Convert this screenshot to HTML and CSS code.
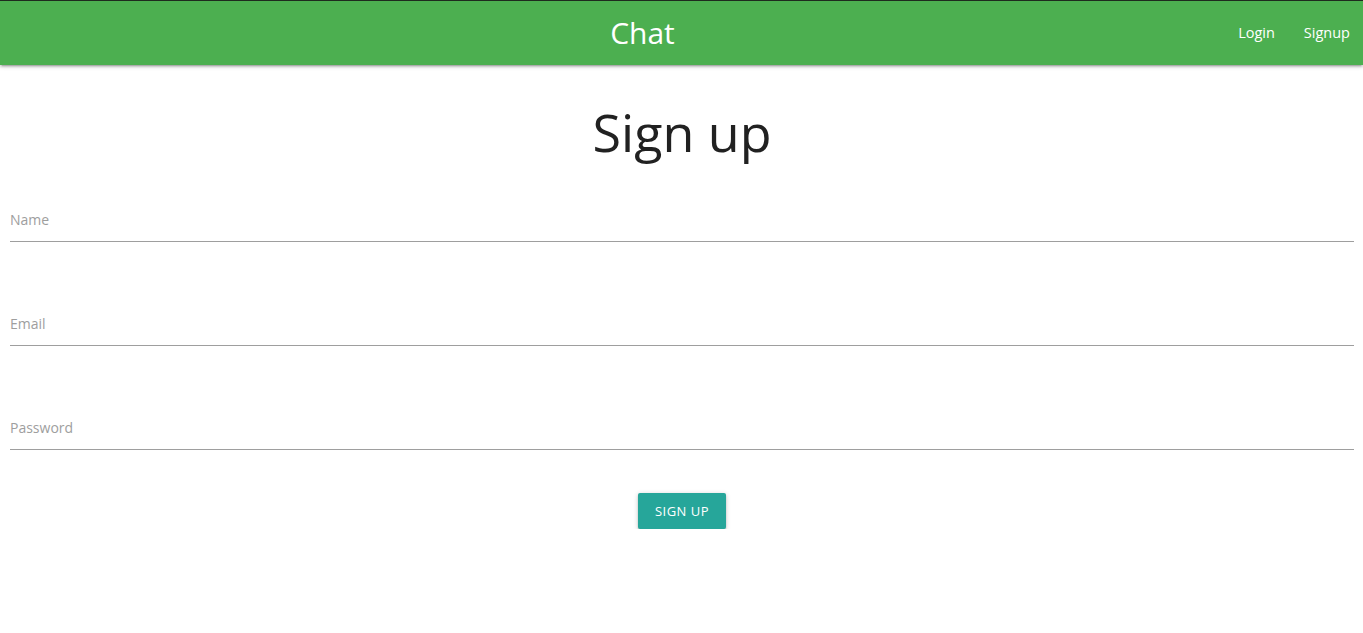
FILE: index.html
```html
<!DOCTYPE html>
<html lang="en">
<head>
<meta charset="utf-8">
<title>Chat - Sign up</title>
<link rel="stylesheet" href="styles.css">
</head>
<body>
<nav class="nav">
  <div class="nav-inner">
    <a class="brand" href="#">Chat</a>
    <ul class="nav-links">
      <li><a href="#">Login</a></li>
      <li><a href="#">Signup</a></li>
    </ul>
  </div>
</nav>
<main class="page">
  <h1 class="title">Sign up</h1>
  <form class="form">
    <div class="field">
      <input class="input" type="text" id="name">
      <label class="label" for="name">Name</label>
    </div>
    <div class="field">
      <input class="input" type="email" id="email">
      <label class="label" for="email">Email</label>
    </div>
    <div class="field">
      <input class="input" type="password" id="password">
      <label class="label" for="password">Password</label>
    </div>
    <div class="actions">
      <button class="btn" type="button">Sign up</button>
    </div>
  </form>
</main>
</body>
</html>
```

FILE: styles.css
```css
* { box-sizing: border-box; }
html, body { margin: 0; padding: 0; }
body {
  font-family: "Open Sans", "Noto Sans", sans-serif;
  color: rgba(0,0,0,0.87);
  background: #fff;
  border-top: 1px solid #1e2a1e;
}
.nav {
  background: #4caf50;
  height: 64px;
  box-shadow: 0 2px 2px 0 rgba(0,0,0,0.14), 0 3px 1px -2px rgba(0,0,0,0.12), 0 1px 5px 0 rgba(0,0,0,0.2);
  position: relative;
}
.nav-inner {
  height: 64px;
  display: flex;
  align-items: center;
  justify-content: center;
  position: relative;
}
.brand {
  color: #fff;
  text-decoration: none;
  font-size: 30px;
  line-height: 64px;
  margin-right: 78px;
}
.nav-links {
  position: absolute;
  right: 0;
  top: 0;
  margin: 0;
  padding: 0;
  list-style: none;
  display: flex;
  height: 64px;
}
.nav-links a {
  display: block;
  color: #fff;
  text-decoration: none;
  font-size: 14.5px;
  line-height: 64px;
  padding: 0 13px 0 16px;
}
.page {
  padding: 0 9px 0 10px;
}
.title {
  margin: 35px 0 0;
  text-align: center;
  font-weight: 400;
  font-size: 52px;
  line-height: 64px;
  color: #212121;
}
.form {
  display: flex;
  flex-direction: column;
  gap: 56px;
  margin-top: 30px;
}
.field {
  position: relative;
  height: 48px;
  border-bottom: 1px solid #9e9e9e;
}
.input {
  width: 100%;
  height: 47px;
  border: none;
  outline: none;
  background: transparent;
  font: inherit;
  font-size: 16px;
  padding: 0;
}
.label {
  position: absolute;
  left: 0;
  top: 2px;
  line-height: 47px;
  font-size: 14px;
  color: #9e9e9e;
}
.actions {
  display: flex;
  justify-content: center;
  margin-top: -13px;
}
.btn {
  background: #26a69a;
  color: #fff;
  border: none;
  border-radius: 2px;
  height: 36px;
  padding: 0 17px;
  font-family: inherit;
  font-size: 13px;
  letter-spacing: 0.5px;
  text-transform: uppercase;
  box-shadow: 0 2px 2px 0 rgba(0,0,0,0.14), 0 3px 1px -2px rgba(0,0,0,0.12), 0 1px 5px 0 rgba(0,0,0,0.2);
  cursor: pointer;
}
```
